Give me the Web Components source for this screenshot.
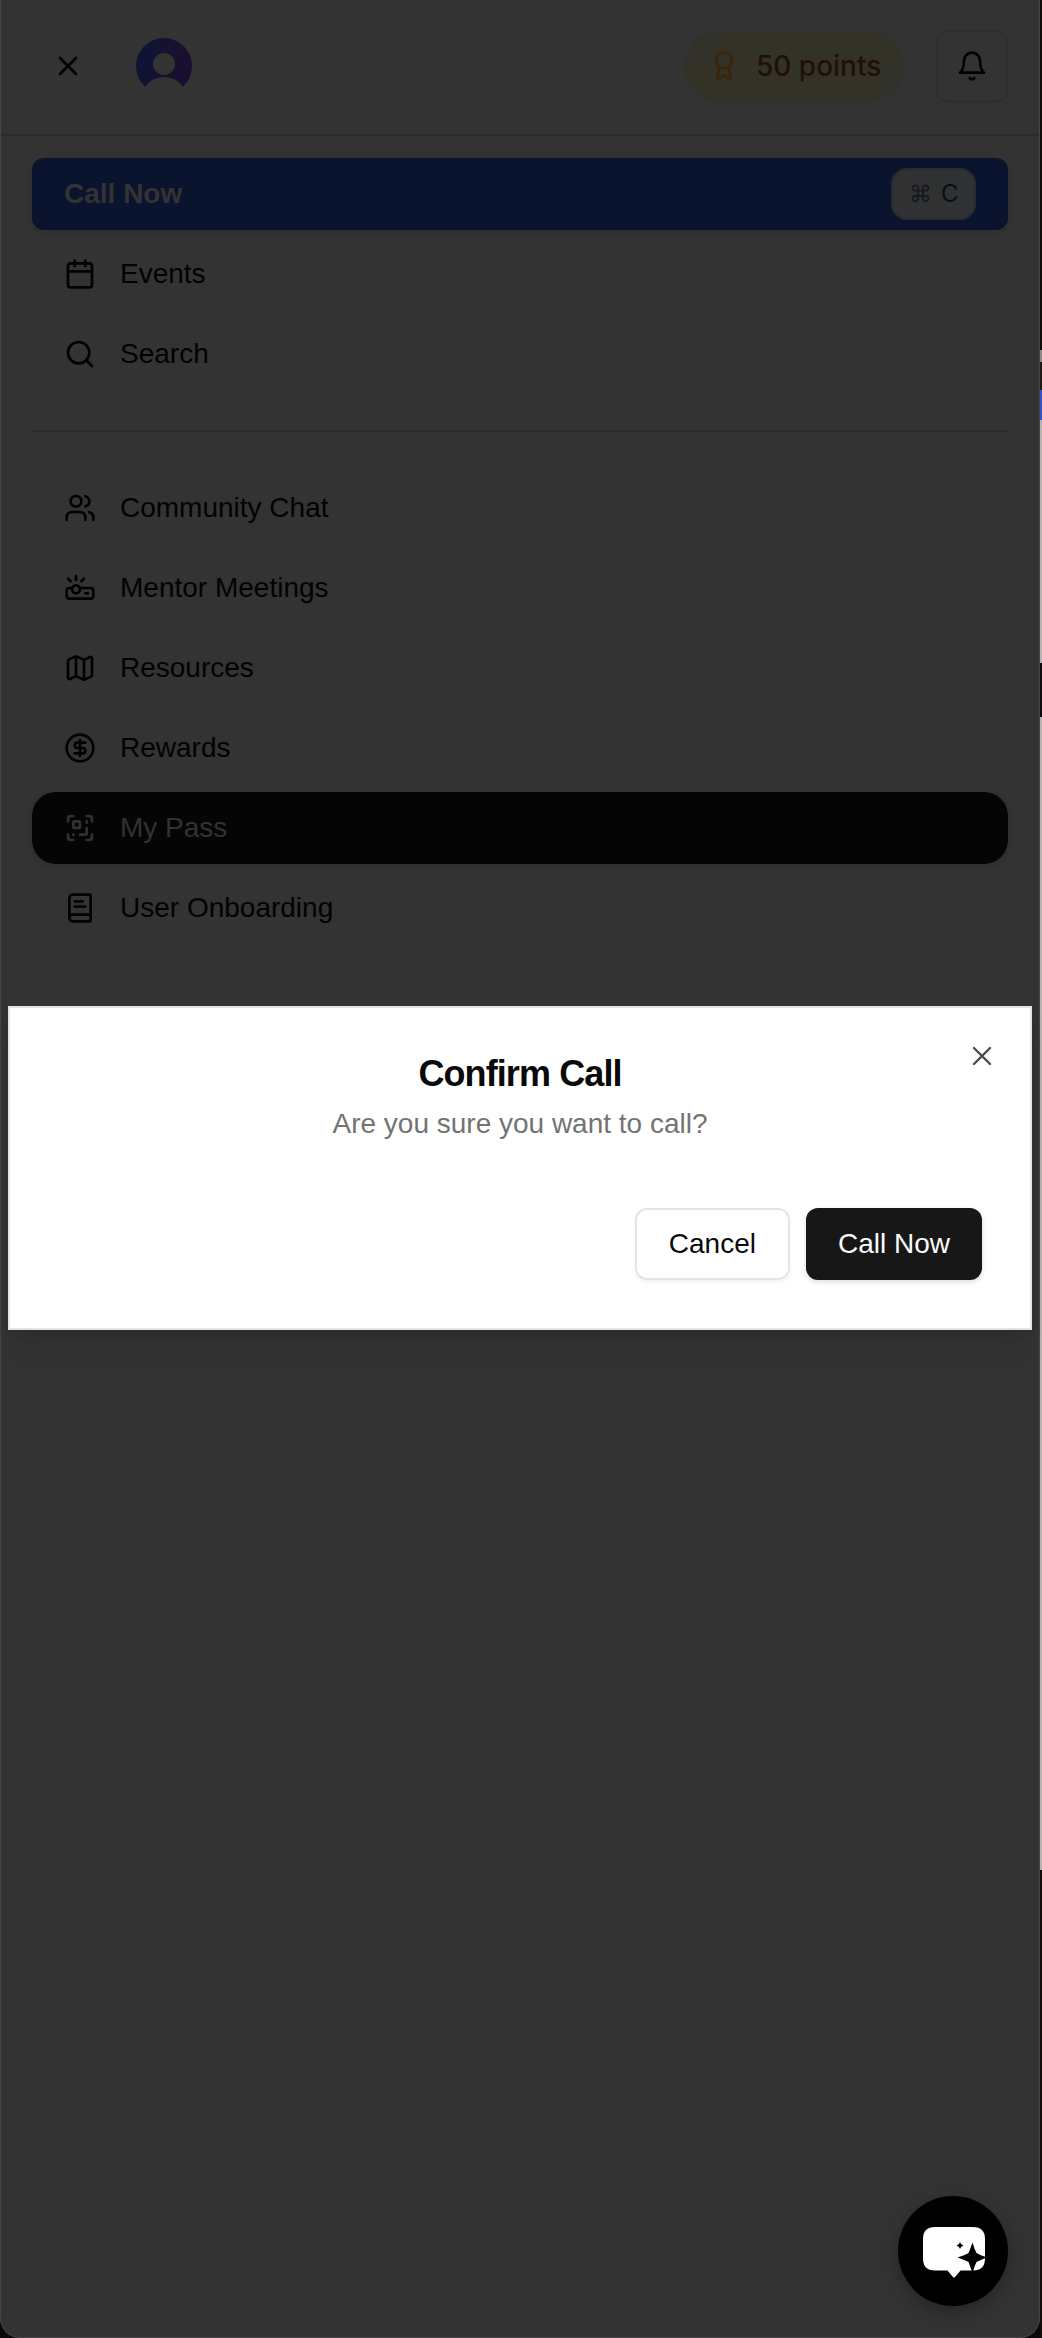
<!DOCTYPE html>
<html lang="en">
<head>
<meta charset="utf-8">
<title>Menu</title>
<style>
html,body{margin:0;height:2338px;background:#0a0a09;overflow:hidden}
body{font-family:"Liberation Sans",Arial,sans-serif;font-size:28px;line-height:40px;color:#020202}
</style>
</head>
<body>
<app-shell>
  <side-panel>
    <panel-header slot="header"></panel-header>
    <call-bar>Call Now</call-bar>
    <nav-item icon="calendar">Events</nav-item>
    <nav-item icon="search">Search</nav-item>
    <nav-divider></nav-divider>
    <nav-item icon="users">Community Chat</nav-item>
    <nav-item icon="projector">Mentor Meetings</nav-item>
    <nav-item icon="map">Resources</nav-item>
    <nav-item icon="dollar">Rewards</nav-item>
    <nav-item icon="qr" active>My Pass</nav-item>
    <nav-item icon="book">User Onboarding</nav-item>
  </side-panel>
  <page-edge slot="edge"></page-edge>
  <confirm-dialog slot="overlay">
    <span slot="title">Confirm Call</span>
    <span slot="description">Are you sure you want to call?</span>
    <dialog-button slot="actions">Cancel</dialog-button>
    <dialog-button slot="actions" primary>Call Now</dialog-button>
  </confirm-dialog>
  <chat-launcher slot="overlay"></chat-launcher>
</app-shell>
<script>
const define = (name, html) => customElements.define(name, class extends HTMLElement {
  constructor(){
    super();
    const t = document.createElement('template');
    t.innerHTML = html;
    this.attachShadow({mode:'open'}).append(t.content.cloneNode(true));
  }
});

const ICONS = {
  x:'<path d="M18 6 6 18M6 6l12 12"/>',
  award:'<path d="m15.477 12.89 1.515 8.526a.5.5 0 0 1-.81.47l-3.58-2.687a1 1 0 0 0-1.197 0l-3.586 2.686a.5.5 0 0 1-.81-.469l1.514-8.526"/><circle cx="12" cy="8" r="6"/>',
  bell:'<path d="M6 8a6 6 0 0 1 12 0c0 7 3 9 3 9H3s3-2 3-9"/><path d="M10.3 21a1.94 1.94 0 0 0 3.4 0"/>',
  calendar:'<path d="M8 2v4M16 2v4M3 10h18"/><rect x="3" y="4" width="18" height="18" rx="2"/>',
  search:'<circle cx="11" cy="11" r="8"/><path d="m21 21-4.3-4.3"/>',
  users:'<path d="M16 21v-2a4 4 0 0 0-4-4H6a4 4 0 0 0-4 4v2"/><circle cx="9" cy="7" r="4"/><path d="M22 21v-2a4 4 0 0 0-3-3.87M16 3.13a4 4 0 0 1 0 7.75"/>',
  projector:'<path d="M5 7 3 5M9 6V3M13 7l2-2"/><circle cx="9" cy="13" r="3"/><path d="M11.83 12H20a2 2 0 0 1 2 2v4a2 2 0 0 1-2 2H4a2 2 0 0 1-2-2v-4a2 2 0 0 1 2-2h2.17M16 16h2"/>',
  map:'<path d="M14.106 5.553a2 2 0 0 0 1.788 0l3.659-1.83A1 1 0 0 1 21 4.619v12.764a1 1 0 0 1-.553.894l-4.553 2.277a2 2 0 0 1-1.788 0l-4.212-2.106a2 2 0 0 0-1.788 0l-3.659 1.83A1 1 0 0 1 3 19.381V6.618a1 1 0 0 1 .553-.894l4.553-2.277a2 2 0 0 1 1.788 0zM15 5.764v15M9 3.236v15"/>',
  dollar:'<circle cx="12" cy="12" r="10"/><path d="M16 8h-6a2 2 0 1 0 0 4h4a2 2 0 1 1 0 4H8M12 18V6"/>',
  qr:'<path d="M17 12v4a1 1 0 0 1-1 1h-4M17 3h2a2 2 0 0 1 2 2v2M17 8V7M21 17v2a2 2 0 0 1-2 2h-2M3 7V5a2 2 0 0 1 2-2h2M7 17h.01M7 21H5a2 2 0 0 1-2-2v-2"/><rect x="7" y="7" width="5" height="5" rx="1"/>',
  book:'<path d="M4 19.5v-15A2.5 2.5 0 0 1 6.5 2H19a1 1 0 0 1 1 1v18a1 1 0 0 1-1 1H6.5a1 1 0 0 1 0-5H20M8 11h8M8 7h6"/>'
};
customElements.define('line-icon', class extends HTMLElement {
  constructor(){ super(); this.attachShadow({mode:'open'}); }
  connectedCallback(){
    this.shadowRoot.innerHTML = `<style>:host{display:block;flex:none;width:32px;height:32px}svg{display:block;width:100%;height:100%;fill:none;stroke:currentColor;stroke-width:${this.getAttribute('weight')||2};stroke-linecap:round;stroke-linejoin:round}</style><svg viewBox="0 0 24 24">${ICONS[this.getAttribute('name')]}</svg>`;
  }
});

define('app-shell', `<style>
:host{display:grid;grid-template-columns:1040px 2px;width:1042px;height:2338px;position:relative;overflow:hidden}
</style><slot></slot><slot name="edge"></slot><slot name="overlay"></slot>`);

define('side-panel', `<style>
:host{display:flex;flex-direction:column;box-sizing:border-box;height:2338px;background:#333;border:1px solid #464646;border-top:0;border-radius:0 0 20px 20px}
nav{display:flex;flex-direction:column;gap:8px;padding:22px 31px}
</style><slot name="header"></slot><nav><slot></slot></nav>`);

define('panel-header', `<style>
:host{display:flex;align-items:center;box-sizing:border-box;height:136px;padding:0 31px 2px 51px;border-bottom:2px solid #2a2a2f}
.avatar{display:block;width:56px;height:56px;margin-left:52px}
.pill{display:flex;align-items:center;box-sizing:border-box;gap:16px;width:220px;height:72px;padding-left:24px;margin:0 32px 0 auto;border-radius:36px;background:#333228;color:#3a2509}
.pill span{font:500 28px/40px Inter,sans-serif;color:#201105;white-space:nowrap}
.bell{display:flex;align-items:center;justify-content:center;box-sizing:border-box;width:72px;height:72px;border:2px solid #2e2e2e;border-radius:12px;box-shadow:0 2px 4px rgba(0,0,0,.05)}
</style>
<line-icon name="x"></line-icon>
<svg class="avatar" viewBox="0 0 56 56">
<defs><linearGradient id="g" x1="0" y1=".3" x2="1" y2=".6"><stop offset=".3" stop-color="#101333"/><stop offset=".7" stop-color="#1b0f30"/><stop offset="1" stop-color="#180f30"/></linearGradient>
<mask id="m"><rect width="56" height="56" fill="#fff"/><circle cx="28" cy="26" r="11"/><circle cx="28" cy="62" r="23"/></mask></defs>
<circle cx="28" cy="28" r="28" fill="url(#g)" mask="url(#m)"/></svg>
<div class="pill"><line-icon name="award"></line-icon><span>50 points</span></div>
<div class="bell"><line-icon name="bell"></line-icon></div>`);

define('call-bar', `<style>
:host{display:flex;align-items:center;justify-content:space-between;box-sizing:border-box;height:72px;padding:0 32px;border-radius:12px;background:#0a142e;color:#333;font-weight:700;box-shadow:0 2px 6px rgba(0,0,0,.12)}
kbd{display:flex;align-items:center;box-sizing:border-box;gap:9px;width:85px;height:52px;padding-left:16px;border:2px solid #292c2f;border-radius:16px;background:#2f3132;font:400 24px/32px Inter,sans-serif;color:#0c0d0f}
kbd i{font:normal 23px/32px "DejaVu Sans",sans-serif;color:#15171a;width:23px}
</style><slot></slot><kbd><i>⌘</i><span>C</span></kbd>`);

customElements.define('nav-item', class extends HTMLElement {
  constructor(){ super(); this.attachShadow({mode:'open'}); }
  connectedCallback(){
    this.shadowRoot.innerHTML = `<style>
:host{display:flex;align-items:center;gap:24px;height:72px;padding:0 32px;border-radius:12px}
:host([active]){background:#050505;color:#323232;border-radius:24px;box-shadow:0 2px 6px rgba(0,0,0,.12)}
</style><line-icon name="${this.getAttribute('icon')}"></line-icon><span><slot></slot></span>`;
  }
});

define('nav-divider', `<style>:host{display:block;height:2px;margin:32px 0;background:#2a2a2f}</style>`);

define('page-edge', `<style>
:host{display:flex;flex-direction:column;height:2338px}
div{flex:none}
</style>
<div style="height:350px;background:#0c0c0b"></div>
<div style="height:12px;background:#8c8a88"></div>
<div style="height:28px;background:#1c1a18"></div>
<div style="height:30px;background:#3350c4"></div>
<div style="height:243px;background:#b5b4b2"></div>
<div style="height:54px;background:#0b0b0b"></div>
<div style="height:1153px;background:#b5b4b2"></div>
<div style="height:468px;background:#0e0d0c"></div>`);

define('confirm-dialog', `<style>
:host{position:absolute;left:8px;top:1006px;display:flex;flex-direction:column;box-sizing:border-box;width:1024px;height:324px;padding:48px;border:2px solid #e5e5e5;background:#fff;box-shadow:0 20px 30px -6px rgba(0,0,0,.1),0 8px 12px -8px rgba(0,0,0,.1)}
header{display:flex;flex-direction:column;align-items:center;gap:12px}
h2{margin:0;font-size:36px;line-height:36px;letter-spacing:-.9px;color:#0a0a0a}
p{margin:0;color:#737373}
footer{display:flex;justify-content:flex-end;gap:16px;margin-top:64px}
.close{position:absolute;right:32px;top:32px;color:#4a4a4a}
</style>
<header><h2><slot name="title"></slot></h2><p><slot name="description"></slot></p></header>
<footer><slot name="actions"></slot></footer>
<line-icon class="close" name="x" weight="1.75"></line-icon>`);

define('dialog-button', `<style>
:host{display:flex;align-items:center;box-sizing:border-box;height:72px;padding:0 32px;border:2px solid #e5e5e5;border-radius:12px;background:#fff;color:#0a0a0a;box-shadow:0 2px 4px rgba(0,0,0,.06)}
:host([primary]){border:0;background:#171717;color:#fafafa;box-shadow:0 2px 5px rgba(0,0,0,.14)}
</style><slot></slot>`);

define('chat-launcher', `<style>
:host{position:absolute;left:898px;top:2196px;display:block;width:110px;height:110px;border-radius:50%;background:#000;box-shadow:0 6px 18px rgba(0,0,0,.28)}
svg{display:block}
</style><svg width="110" height="110" viewBox="0 0 110 110">
<path fill="#fff" d="M37 31H75Q87 31 87 43V62.500Q87 74.500 75 74.500H62.500L57.500 80.500Q56 82.500 54.500 80.500L49.500 74.500H37Q25 74.500 25 62.500V43Q25 31 37 31Z"/>
<path fill="#000" d="M74.500 46.500Q76.500 53.500 78.500 57Q82 59 89 61.500Q82 64 78.500 66Q76.500 70 74.500 77Q72 70 70.500 66Q67 64 59.500 61.500Q67 59 70.500 57Q72 53.500 74.500 46.500Z"/>
<path fill="#000" d="M62 46Q62.600 48.900 65.500 49.500Q62.600 50.100 62 53Q61.400 50.100 58.500 49.500Q61.400 48.900 62 46Z"/>
</svg>`);
</script>
</body>
</html>
